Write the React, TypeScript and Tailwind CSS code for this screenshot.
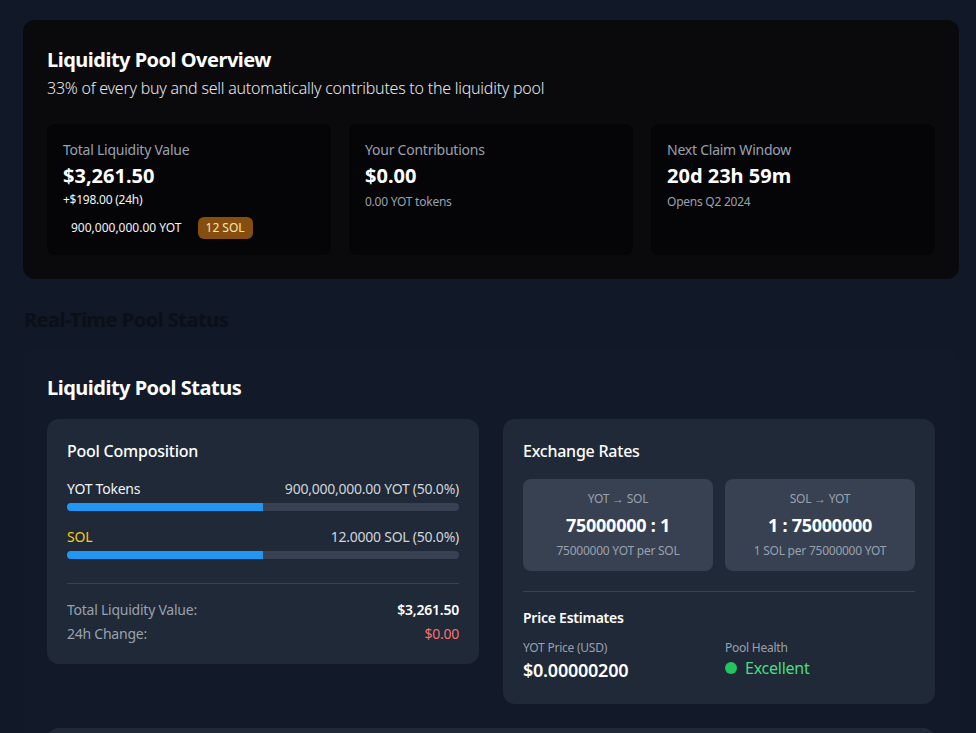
export default function App() {
  return (
    <main className="min-h-screen bg-[#111827] pl-[23px] pr-[17px] pt-5 pb-10 font-['Noto_Sans',sans-serif] tracking-[-0.015em] text-white">
      {/* OVERVIEW */}
      <section className="rounded-xl bg-[#0a0a0d] px-6 pt-[26px] pb-6">
        <h1 className="text-xl font-bold tracking-[-0.025em]">Liquidity Pool Overview</h1>
        <p className="mt-0.5 text-base font-light text-gray-200">
          33% of every buy and sell automatically contributes to the liquidity pool
        </p>

        <div className="mt-6 grid grid-cols-3 gap-[18px]">
          <div className="rounded-lg bg-[#050507] p-4">
            <p className="text-sm text-gray-400">Total Liquidity Value</p>
            <p className="mt-0.5 text-xl font-bold tracking-normal">$3,261.50</p>
            <p className="mt-0.5 text-xs text-gray-100">+$198.00 (24h)</p>
            <div className="mt-[9px] flex items-center gap-2 tracking-normal">
              <span className="rounded px-2 py-[3px] text-xs text-gray-100">
                900,000,000.00 YOT
              </span>
              <span className="rounded-md bg-[#854d0e] px-2 py-[3px] text-xs text-[#fde8b4]">
                12 SOL
              </span>
            </div>
          </div>

          <div className="rounded-lg bg-[#050507] p-4">
            <p className="text-sm text-gray-400">Your Contributions</p>
            <p className="mt-0.5 text-xl font-bold tracking-normal">$0.00</p>
            <p className="mt-1 text-xs text-gray-400">0.00 YOT tokens</p>
          </div>

          <div className="rounded-lg bg-[#050507] p-4">
            <p className="text-sm text-gray-400">Next Claim Window</p>
            <p className="mt-0.5 text-xl font-bold tracking-normal">20d 23h 59m</p>
            <p className="mt-1 text-xs text-gray-400">Opens Q2 2024</p>
          </div>
        </div>
      </section>

      <h2 className="mt-[27px] pl-px text-xl font-bold tracking-[-0.025em] text-[#0b0f17]">
        Real-Time Pool Status
      </h2>

      {/* STATUS */}
      <section className="mt-[15px] rounded-xl bg-[#121a2a] px-6 pt-[25px] pb-6">
        <h2 className="mb-[17px] text-xl font-bold tracking-[-0.025em]">Liquidity Pool Status</h2>

        <div className="grid grid-cols-2 items-start gap-6">
          {/* Composition */}
          <div className="rounded-xl bg-[#1f2937] p-5">
            <h3 className="mb-4 text-base font-medium">Pool Composition</h3>

            <div className="space-y-4">
              <div>
                <div className="flex justify-between text-sm">
                  <span className="text-gray-100">YOT Tokens</span>
                  <span className="text-gray-300">900,000,000.00 YOT (50.0%)</span>
                </div>
                <div className="mt-1 h-2 rounded-full bg-[#374151]">
                  <div className="h-2 w-1/2 rounded-l-full bg-[#2196f3]" />
                </div>
              </div>
              <div>
                <div className="flex justify-between text-sm">
                  <span className="text-[#facc15]">SOL</span>
                  <span className="text-gray-300">12.0000 SOL (50.0%)</span>
                </div>
                <div className="mt-1 h-2 rounded-full bg-[#374151]">
                  <div className="h-2 w-1/2 rounded-l-full bg-[#2196f3]" />
                </div>
              </div>
            </div>

            <div className="mt-6 space-y-1 border-t border-[#374151] pt-4 text-sm">
              <div className="flex justify-between">
                <span className="text-gray-400">Total Liquidity Value:</span>
                <span className="font-semibold">$3,261.50</span>
              </div>
              <div className="flex justify-between">
                <span className="text-gray-400">24h Change:</span>
                <span className="text-[#f87171]">$0.00</span>
              </div>
            </div>
          </div>

          {/* Exchange */}
          <div className="rounded-xl bg-[#1f2937] p-5">
            <h3 className="mb-4 text-base font-medium">Exchange Rates</h3>

            <div className="grid grid-cols-2 gap-3">
              <div className="rounded-lg bg-[#374151] p-3 text-center">
                <p className="text-xs text-gray-400">YOT → SOL</p>
                <p className="mt-1 text-lg font-bold">75000000 : 1</p>
                <p className="mt-1 text-xs text-gray-400">75000000 YOT per SOL</p>
              </div>
              <div className="rounded-lg bg-[#374151] p-3 text-center">
                <p className="text-xs text-gray-400">SOL → YOT</p>
                <p className="mt-1 text-lg font-bold">1 : 75000000</p>
                <p className="mt-1 text-xs text-gray-400">1 SOL per 75000000 YOT</p>
              </div>
            </div>

            <div className="mt-5 border-t border-[#374151] pt-4">
              <h4 className="text-sm font-semibold">Price Estimates</h4>
              <div className="mt-3 grid grid-cols-2 gap-3">
                <div>
                  <p className="text-xs text-gray-400">YOT Price (USD)</p>
                  <p className="text-lg font-semibold">$0.00000200</p>
                </div>
                <div>
                  <p className="text-xs text-gray-400">Pool Health</p>
                  <div className="flex items-center gap-2">
                    <span className="h-3 w-3 rounded-full bg-[#22c55e]" />
                    <span className="text-base text-[#4ade80]">Excellent</span>
                  </div>
                </div>
              </div>
            </div>
          </div>
        </div>

        <div className="mt-6 rounded-xl bg-[#1f2937] p-5">
          <h3 className="text-base font-medium">Recent Pool Activity</h3>
          <p className="mt-2 text-sm text-gray-400">No recent activity</p>
        </div>
      </section>
    </main>
  );
}
